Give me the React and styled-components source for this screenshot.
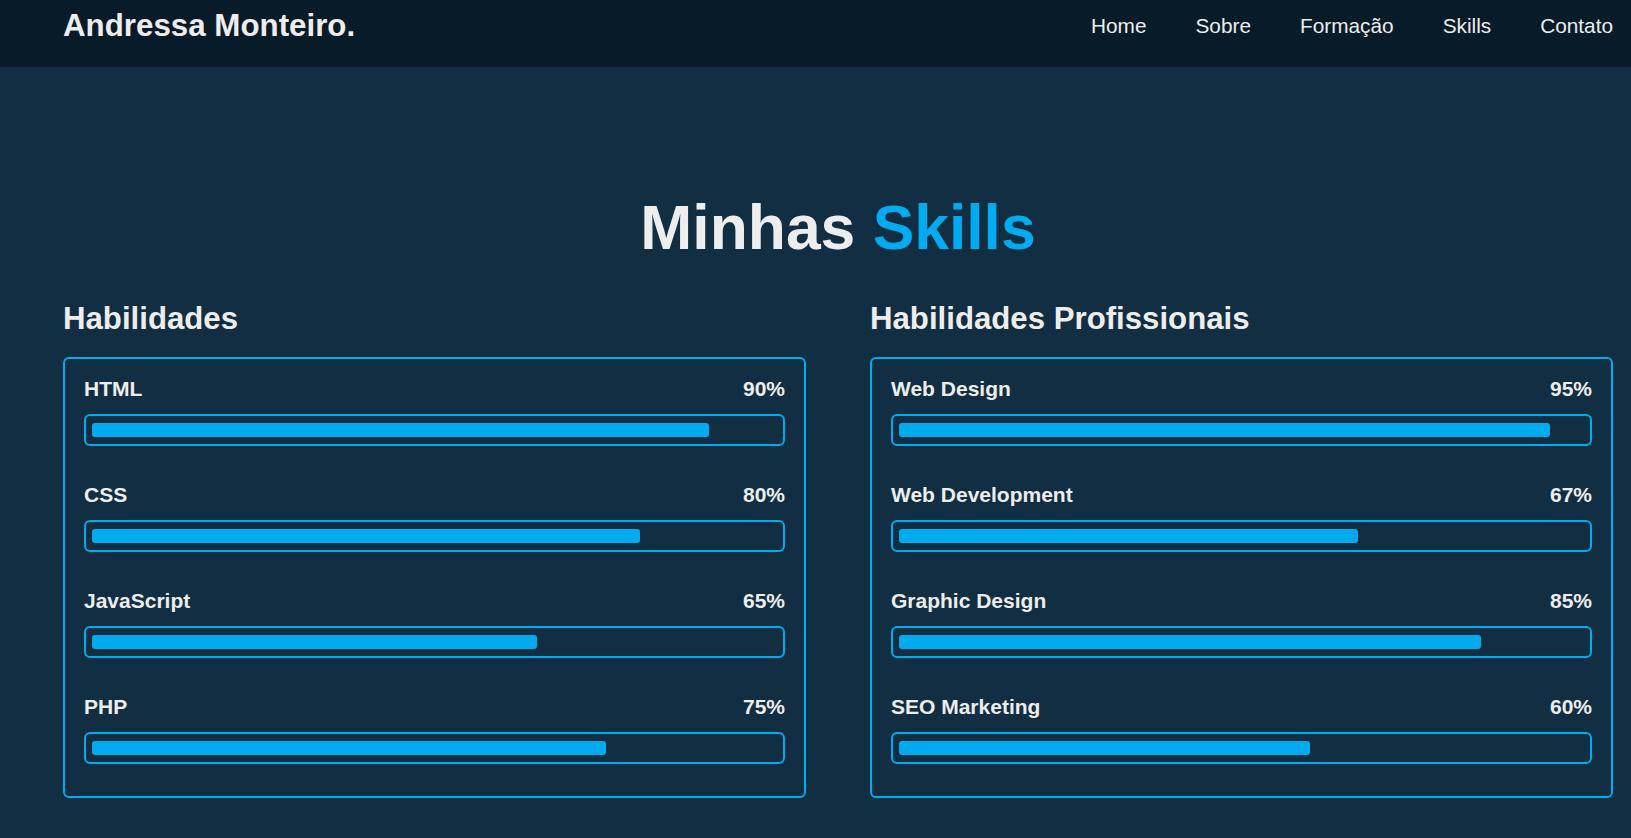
import React from "react";
import styled, { createGlobalStyle } from "styled-components";

const GlobalStyle = createGlobalStyle`
  html, body {
    margin: 0;
    padding: 0;
    background: #112e42;
    color: #ededed;
    font-family: "Liberation Sans", Arial, sans-serif;
  }
  * { box-sizing: border-box; }
`;

const Header = styled.header`
  height: 67px;
  background: #081b29;
  display: flex;
  justify-content: space-between;
  align-items: center;
  padding: 0 18px 16px 63px;
`;

const Logo = styled.a`
  font-size: 31.3px;
  font-weight: 700;
  color: #ededed;
  text-decoration: none;
`;

const Nav = styled.nav`
  display: flex;
  gap: 49px;
`;

const NavLink = styled.a`
  font-size: 20.8px;
  color: #ededed;
  text-decoration: none;
`;

const Section = styled.section`
  padding: 130px 18px 40px 63px;
`;

const Title = styled.h2`
  margin: 0 0 44px;
  text-align: center;
  font-size: 62.4px;
  line-height: 62px;
  font-weight: 700;
  color: #ededed;
`;

const Accent = styled.span`
  color: #00abf0;
`;

const Columns = styled.div`
  display: grid;
  grid-template-columns: 1fr 1fr;
  column-gap: 64px;
`;

const Column = styled.div`
  display: flex;
  flex-direction: column;
`;

const ColumnTitle = styled.h3`
  margin: 0 0 23px;
  font-size: 31.2px;
  line-height: 31px;
  font-weight: 700;
  color: #ededed;
`;

const Card = styled.div`
  border: 2px solid #00abf0;
  border-radius: 6px;
  padding: 20px 19px 32px;
  display: flex;
  flex-direction: column;
  gap: 39px;
`;

const SkillRow = styled.div`
  display: flex;
  flex-direction: column;
  gap: 15px;
`;

const SkillHead = styled.div`
  display: flex;
  justify-content: space-between;
  font-size: 21px;
  line-height: 20px;
  font-weight: 700;
  color: #ededed;
`;

const Bar = styled.div`
  border: 2px solid #00abf0;
  border-radius: 6px;
  padding: 7px 6px;
`;

const Fill = styled.div`
  height: 14px;
  background: #00abf0;
  border-radius: 3px;
`;

const left = [
  { name: "HTML", value: 90 },
  { name: "CSS", value: 80 },
  { name: "JavaScript", value: 65 },
  { name: "PHP", value: 75 },
];

const right = [
  { name: "Web Design", value: 95 },
  { name: "Web Development", value: 67 },
  { name: "Graphic Design", value: 85 },
  { name: "SEO Marketing", value: 60 },
];

function SkillCard({ title, items }) {
  return (
    <Column>
      <ColumnTitle>{title}</ColumnTitle>
      <Card>
        {items.map((s) => (
          <SkillRow key={s.name}>
            <SkillHead>
              <span>{s.name}</span>
              <span>{s.value}%</span>
            </SkillHead>
            <Bar>
              <Fill style={{ width: `${s.value}%` }} />
            </Bar>
          </SkillRow>
        ))}
      </Card>
    </Column>
  );
}

export default function App() {
  return (
    <>
      <GlobalStyle />
      <Header>
        <Logo href="#">Andressa Monteiro.</Logo>
        <Nav>
          <NavLink href="#">Home</NavLink>
          <NavLink href="#">Sobre</NavLink>
          <NavLink href="#">Formação</NavLink>
          <NavLink href="#">Skills</NavLink>
          <NavLink href="#">Contato</NavLink>
        </Nav>
      </Header>
      <Section>
        <Title>
          Minhas <Accent>Skills</Accent>
        </Title>
        <Columns>
          <SkillCard title="Habilidades" items={left} />
          <SkillCard title="Habilidades Profissionais" items={right} />
        </Columns>
      </Section>
    </>
  );
}
